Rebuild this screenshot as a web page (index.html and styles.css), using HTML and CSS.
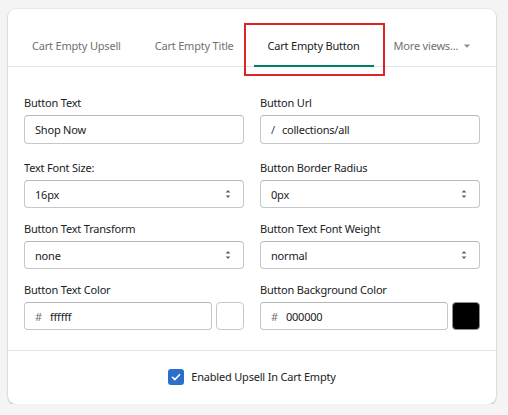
FILE: index.html
```html
<!DOCTYPE html>
<html>
<head>
<meta charset="utf-8">
<link rel="stylesheet" href="styles.css">
</head>
<body>
<div class="card">
  <ul class="tabs">
    <li class="tab"><span class="tab-title">Cart Empty Upsell</span></li>
    <li class="tab"><span class="tab-title">Cart Empty Title</span></li>
    <li class="tab tab-active"><span class="tab-title">Cart Empty Button</span><span class="highlight"></span></li>
    <li class="tab"><span class="tab-title">More views...<svg class="caret" viewBox="0 0 20 20" width="14" height="14"><path d="M5.5 8l4.5 4.5 4.5-4.5z" fill="#8c9196"/></svg></span></li>
  </ul>
  <div class="form">
    <div class="field row-first">
      <label class="label">Button Text</label>
      <div class="control control-tall"><span class="value">Shop Now</span></div>
    </div>
    <div class="field row-first">
      <label class="label">Button Url</label>
      <div class="control control-tall"><span class="prefix prefix-slash">/</span><span class="value">collections/all</span></div>
    </div>
    <div class="field">
      <label class="label">Text Font Size:</label>
      <div class="control select"><span class="value">16px</span><svg class="arrows" viewBox="0 0 20 20" width="16" height="16"><path d="M13 8l-3-3-3 3h6zm-.1 4L10 14.9 7.1 12h5.8z" fill="#5c5f62"/></svg></div>
    </div>
    <div class="field">
      <label class="label">Button Border Radius</label>
      <div class="control select"><span class="value">0px</span><svg class="arrows" viewBox="0 0 20 20" width="16" height="16"><path d="M13 8l-3-3-3 3h6zm-.1 4L10 14.9 7.1 12h5.8z" fill="#5c5f62"/></svg></div>
    </div>
    <div class="field">
      <label class="label">Button Text Transform</label>
      <div class="control select"><span class="value">none</span><svg class="arrows" viewBox="0 0 20 20" width="16" height="16"><path d="M13 8l-3-3-3 3h6zm-.1 4L10 14.9 7.1 12h5.8z" fill="#5c5f62"/></svg></div>
    </div>
    <div class="field">
      <label class="label">Button Text Font Weight</label>
      <div class="control select"><span class="value">normal</span><svg class="arrows" viewBox="0 0 20 20" width="16" height="16"><path d="M13 8l-3-3-3 3h6zm-.1 4L10 14.9 7.1 12h5.8z" fill="#5c5f62"/></svg></div>
    </div>
    <div class="field">
      <label class="label">Button Text Color</label>
      <div class="color-row">
        <div class="control grow"><span class="prefix">#</span><span class="value">ffffff</span></div>
        <div class="swatch swatch-white"></div>
      </div>
    </div>
    <div class="field">
      <label class="label">Button Background Color</label>
      <div class="color-row">
        <div class="control grow"><span class="prefix">#</span><span class="value">000000</span></div>
        <div class="swatch swatch-black"></div>
      </div>
    </div>
  </div>
  <div class="footer">
    <span class="checkbox"><svg viewBox="0 0 16 16" width="16" height="16"><path d="M4.5 8.3l2.3 2.3 4.7-4.9" fill="none" stroke="#fff" stroke-width="1.6" stroke-linecap="round" stroke-linejoin="round"/></svg></span>
    <span class="check-label">Enabled Upsell In Cart Empty</span>
  </div>
</div>
</body>
</html>
```

FILE: styles.css
```css
* { box-sizing: border-box; }
html, body { margin: 0; padding: 0; }
body {
  background: #f4f4f4;
  font-family: "Noto Sans", "Open Sans", sans-serif;
  font-size: 11px;
  letter-spacing: -0.2px;
  color: #202223;
  padding: 9px 12px 0 8px;
}
.card {
  width: 488px;
  height: 395px;
  background: #fff;
  border-radius: 8px;
  box-shadow: 0 1px 2px rgba(0,0,0,0.22), 0 0 0 1px rgba(0,0,0,0.04);
  display: flex;
  flex-direction: column;
}
.tabs {
  list-style: none;
  margin: 0;
  padding: 0 0 0 7px;
  display: flex;
  border-bottom: 1px solid #e1e3e5;
  height: 58px;
}
.tab {
  padding: 0 3px;
  position: relative;
}
.tab-title {
  display: flex;
  align-items: center;
  position: relative;
  height: 57px;
  padding: 17px 14px 0;
  line-height: 16px;
  color: #6d7175;
  white-space: nowrap;
}
.tab-active .tab-title { color: #202223; }
.tab-active .tab-title::after {
  content: "";
  position: absolute;
  left: 0;
  right: 0;
  bottom: -1px;
  height: 2px;
  background: #007f5f;
}
.caret { margin-left: 2px; }
.highlight {
  position: absolute;
  left: -7px;
  right: -8px;
  top: 14px;
  height: 53px;
  border: 2px solid #e02424;
  pointer-events: none;
}
.form {
  display: grid;
  grid-template-columns: 220px 220px;
  column-gap: 16px;
  row-gap: 13px;
  padding: 28px 16px 20px;
  border-bottom: 1px solid #e1e3e5;
}
.row-first { margin-bottom: 3px; }
.label {
  display: block;
  line-height: 16px;
  margin-bottom: 4px;
}
.control {
  height: 28px;
  border: 1px solid #c4c6c8;
  border-top-color: #b5b8bb;
  border-radius: 4px;
  display: flex;
  align-items: center;
  padding: 0 10px;
  background: #fff;
}
.control-tall { height: 29px; }
.select { justify-content: space-between; padding-right: 7px; }
.value { color: #202223; }
.prefix { color: #6d7175; margin-right: 8px; }
.prefix-slash { color: #45494d; margin-right: 7px; }
.color-row { display: flex; gap: 4px; }
.grow { flex: 1; }
.swatch {
  width: 28px;
  height: 28px;
  border-radius: 4px;
  border: 1px solid #c4c6c8;
}
.swatch-white { background: #fff; }
.swatch-black { background: #000; border-color: #8c9196; }
.footer {
  flex: 1;
  display: flex;
  align-items: center;
  justify-content: center;
  gap: 7px;
  padding-bottom: 1px;
}
.checkbox {
  width: 16px;
  height: 16px;
  border-radius: 3px;
  background: #2c6ecb;
  display: block;
}
.checkbox svg { display: block; }
.check-label { line-height: 16px; }
```
